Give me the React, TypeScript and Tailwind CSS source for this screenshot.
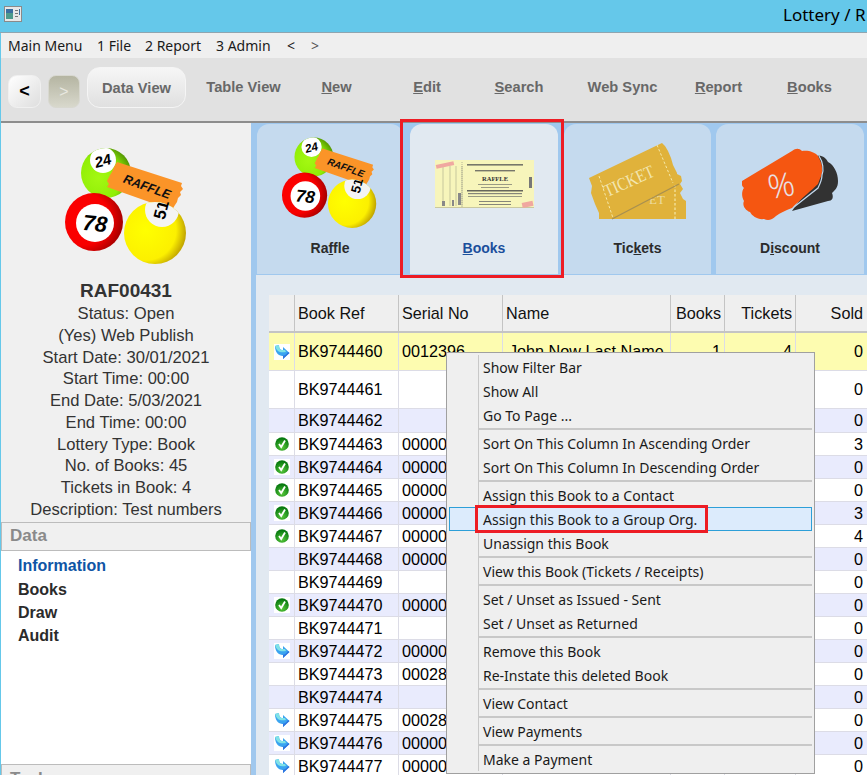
import React from 'react';

const RaffleLogo: React.FC<{ className?: string; id: string }> = ({ className, id }) => (
  <svg viewBox="0 0 122 118" className={className}>
    <defs>
      <radialGradient id={`${id}-g`} cx="35%" cy="60%" r="70%">
        <stop offset="0%" stopColor="#a4f812" />
        <stop offset="65%" stopColor="#90ee06" />
        <stop offset="100%" stopColor="#4f8f02" />
      </radialGradient>
      <radialGradient id={`${id}-r`} cx="32%" cy="45%" r="72%">
        <stop offset="0%" stopColor="#ff0000" />
        <stop offset="62%" stopColor="#f80000" />
        <stop offset="100%" stopColor="#980000" />
      </radialGradient>
      <radialGradient id={`${id}-y`} cx="35%" cy="45%" r="72%">
        <stop offset="0%" stopColor="#ffff00" />
        <stop offset="68%" stopColor="#fcf000" />
        <stop offset="100%" stopColor="#a88400" />
      </radialGradient>
      <clipPath id={`${id}-gc`}><circle cx="41" cy="25" r="25" /></clipPath>
      <clipPath id={`${id}-yc`}><circle cx="90" cy="85" r="31" /></clipPath>
    </defs>
    <circle cx="41" cy="25" r="25" fill={`url(#${id}-g)`} />
    <circle cx="38" cy="12" r="13" fill="#fff" clipPath={`url(#${id}-gc)`} />
    <text x="38" y="18" textAnchor="middle" fontFamily="Liberation Sans, sans-serif" fontSize="15" fontWeight="700" fontStyle="italic" fill="#000" transform="rotate(-15 38 13)">24</text>
    <polygon points="52,14 117,35 116,38 118,41 115,44 116,47 113,50 112,54 110,57 107,62 42,39 44,36 42,33 45,27 47,24 49,19" fill="#fb9428" />
    <text x="82" y="43" textAnchor="middle" fontFamily="Liberation Sans, sans-serif" fontSize="12.5" fontWeight="700" fontStyle="italic" fill="#111" transform="rotate(20 82 39)">RAFFLE</text>
    <circle cx="29" cy="74" r="29" fill={`url(#${id}-r)`} />
    <circle cx="30" cy="75" r="19" fill="#fff" />
    <text x="30" y="83" textAnchor="middle" fontFamily="Liberation Sans, sans-serif" fontSize="22" fontWeight="700" fontStyle="italic" fill="#000" transform="rotate(6 30 75)">78</text>
    <circle cx="90" cy="85" r="31" fill={`url(#${id}-y)`} />
    <circle cx="97" cy="62" r="17" fill="#f4f4f4" clipPath={`url(#${id}-yc)`} />
    <text x="97" y="67" textAnchor="middle" fontFamily="Liberation Sans, sans-serif" fontSize="17" fontWeight="700" fill="#000" transform="rotate(-75 97 62)" clipPath={`url(#${id}-yc)`}>51</text>
  </svg>
);

const BookImage = () => (
  <svg viewBox="0 0 99 48" className="w-[99px] h-[48px] mt-[4px]">
    <rect width="99" height="48" fill="#f7f5bb" />
    <rect y="47" width="99" height="1" fill="#c9c8a0" />
    {[8, 15, 21, 27].map((x) => (
      <line key={x} x1={x} y1="6" x2={x} y2="46" stroke="#a8a88a" strokeWidth="0.6" />
    ))}
    <line x1="27" y1="2" x2="27" y2="47" stroke="#777" strokeWidth="0.5" strokeDasharray="1 1" />
    <rect x="1" y="3" width="18" height="4" fill="#f0a8a0" transform="rotate(-12 10 5)" />
    <rect x="87" y="42" width="11" height="5" fill="#f0a8a0" transform="rotate(-12 92 44)" />
    <rect x="32" y="4" width="56" height="1.6" fill="#77776a" />
    <rect x="40" y="10" width="40" height="1.4" fill="#77776a" />
    <text x="60" y="20.5" textAnchor="middle" fontFamily="Liberation Serif, serif" fontSize="6.5" fontWeight="700" fill="#333">RAFFLE</text>
    <rect x="43" y="24" width="34" height="1" fill="#9a9a84" />
    <rect x="46" y="27" width="28" height="1" fill="#9a9a84" />
    <rect x="32" y="30" width="56" height="1.5" fill="#66665c" />
    <rect x="33" y="33" width="54" height="1.2" fill="#85857a" />
    <rect x="33" y="36" width="54" height="1" fill="#9a9a84" />
    <rect x="44" y="41" width="32" height="1" fill="#85857a" />
    <rect x="44" y="44" width="32" height="1" fill="#85857a" />
    <rect x="94" y="17" width="3" height="11" fill="#777" />
    <rect x="23" y="33" width="3" height="12" fill="#888" />
    <rect x="7" y="41" width="3" height="5" fill="#888" />
    <rect x="17" y="40" width="2" height="6" fill="#888" />
  </svg>
);

const TicketsImage = () => (
  <svg viewBox="0 0 98 78" className="w-[98px] h-[78px]">
    <polygon points="40,40 88,31 92,33 93,38 91,41 94,46 91,50 94,56 97,58 97,76 23,76" fill="#e0b23b" />
    <text x="68" y="61" textAnchor="middle" fontFamily="Liberation Serif, serif" fontSize="13" fill="#ecdca0">ET</text>
    <line x1="86" y1="42" x2="86" y2="76" stroke="#f5e8a8" strokeWidth="1.2" strokeDasharray="2.5 2" />
    <polygon points="0,35 73,0 76,3 79,8 82,15 84,22 88,30 88,41 23,76 10,76 10,70 6,61 2,50 3,43" fill="#e0b23b" />
    <line x1="10" y1="33" x2="24" y2="75" stroke="#f5e8a8" strokeWidth="1" strokeDasharray="2.5 2" />
    <line x1="68" y1="2" x2="84" y2="40" stroke="#f5e8a8" strokeWidth="1" strokeDasharray="2.5 2" />
    <line x1="23" y1="76" x2="90" y2="41" stroke="#a89050" strokeWidth="1.4" />
    <text x="40" y="44" textAnchor="middle" fontFamily="Liberation Serif, serif" fontSize="18" fill="#f3e6b0" transform="rotate(-24 40 38)" textLength="53" lengthAdjust="spacingAndGlyphs">TICKET</text>
  </svg>
);

const DiscountImage = () => (
  <svg viewBox="0 0 96 73" className="w-[96px] h-[73px] mt-[6px]">
    <path d="M75 8 C80 7 84 10 86 14 C92 17 96 25 96 33 C96 40 93 42 90 45 C92 50 90 53 86 53 L50 63 L66 40 Z" fill="#323232" />
    <path d="M0 33 L50 3 C54 0 57 0 60 3 C66 2 73 4 76 8 C78 12 80 16 80 20 C81 26 78 30 76 36 C70 42 60 50 50 60 C44 62 38 65 34 68 C30 72 26 73 22 71 C16 72 10 68 8 64 C3 62 0 57 2 53 C-1 48 0 42 2 40 C0 38 -1 36 0 33 Z" fill="#f55611" />
    <path d="M77 8 C81 14 82 22 80 27 C80 32 78 36 76 40 L52 59" fill="none" stroke="#c5daee" strokeWidth="1.2" />
    <text x="39" y="49" textAnchor="middle" fontFamily="Noto Sans, sans-serif" fontSize="33" fontWeight="300" fill="#e8dfe0" transform="rotate(-10 39 37)">%</text>
  </svg>
);

const ArrowIcon = () => (
  <span className="w-4 h-4 bg-white flex items-center justify-center">
    <svg viewBox="0 0 16 16" className="w-4 h-4">
      <path d="M1 2 L5 1 C5 4 6 6 9 6 L9 3 L15.5 9 L9 15 L9 12 C4 12 1 8 1 2 Z" fill="#3aa4f0" />
      <path d="M1 2 L5 1 C5 4 6 6 9 6 L11 6 L12 8 C6 9 3 8 1 2 Z" fill="#7fe2e6" />
      <path d="M7 12 L9 12 L9 15 L15.5 9 L14 8 C12 11 10 12 7 12 Z" fill="#2f74e0" />
    </svg>
  </span>
);

const CheckIcon = () => (
  <span className="w-4 h-4 bg-white flex items-center justify-center">
    <svg viewBox="0 0 16 16" className="w-4 h-4">
      <defs>
        <radialGradient id="chk" cx="50%" cy="75%" r="65%">
          <stop offset="0%" stopColor="#58c83a" />
          <stop offset="100%" stopColor="#087a10" />
        </radialGradient>
      </defs>
      <circle cx="8" cy="8" r="6.8" fill="url(#chk)" />
      <path d="M5 8 L7.2 11 L11 4.5" fill="none" stroke="#fff" strokeWidth="1.8" />
    </svg>
  </span>
);

type Row = { ref: string; serial?: string; icon?: 'arrow' | 'check'; sold: string; bg: string; h: string; name?: string; books?: string; tickets?: string };

const w = 'bg-white';
const l = 'bg-[#e9ebfd]';
const rows: Row[] = [
  { ref: 'BK9744460', serial: '0012396', icon: 'arrow', sold: '0', bg: 'bg-[#fdfcb0]', h: 'h-[38px]', name: 'John Now Last Name', books: '1', tickets: '4' },
  { ref: 'BK9744461', sold: '0', bg: w, h: 'h-[38px]' },
  { ref: 'BK9744462', sold: '0', bg: l, h: 'h-[24px]' },
  { ref: 'BK9744463', serial: '00000', icon: 'check', sold: '3', bg: w, h: 'h-[23px]' },
  { ref: 'BK9744464', serial: '00000', icon: 'check', sold: '0', bg: l, h: 'h-[23px]' },
  { ref: 'BK9744465', serial: '00000', icon: 'check', sold: '0', bg: w, h: 'h-[23px]' },
  { ref: 'BK9744466', serial: '00000', icon: 'check', sold: '3', bg: l, h: 'h-[23px]' },
  { ref: 'BK9744467', serial: '00000', icon: 'check', sold: '4', bg: w, h: 'h-[23px]' },
  { ref: 'BK9744468', serial: '00000', sold: '0', bg: l, h: 'h-[23px]' },
  { ref: 'BK9744469', sold: '0', bg: w, h: 'h-[23px]' },
  { ref: 'BK9744470', serial: '00000', icon: 'check', sold: '0', bg: l, h: 'h-[23px]' },
  { ref: 'BK9744471', sold: '0', bg: w, h: 'h-[23px]' },
  { ref: 'BK9744472', serial: '00000', icon: 'arrow', sold: '0', bg: l, h: 'h-[23px]' },
  { ref: 'BK9744473', serial: '00028', sold: '0', bg: w, h: 'h-[23px]' },
  { ref: 'BK9744474', sold: '0', bg: l, h: 'h-[23px]' },
  { ref: 'BK9744475', serial: '00028', icon: 'arrow', sold: '0', bg: w, h: 'h-[23px]' },
  { ref: 'BK9744476', serial: '00000', icon: 'arrow', sold: '0', bg: l, h: 'h-[23px]' },
  { ref: 'BK9744477', serial: '00000', icon: 'arrow', sold: '0', bg: w, h: 'h-[23px]' },
];

const infoLines = [
  'Status: Open',
  '(Yes) Web Publish',
  'Start Date: 30/01/2021',
  'Start Time: 00:00',
  'End Date: 5/03/2021',
  'End Time: 00:00',
  'Lottery Type: Book',
  'No. of Books: 45',
  'Tickets in Book: 4',
  'Description: Test numbers',
];

const menuGroups = [
  ['Show Filter Bar', 'Show All', 'Go To Page ...'],
  ['Sort On This Column In Ascending Order', 'Sort On This Column In Descending Order'],
  ['Assign this Book to a Contact', 'Assign this Book to a Group Org.', 'Unassign this Book'],
  ['View this Book (Tickets / Receipts)'],
  ['Set / Unset as Issued - Sent', 'Set / Unset as Returned'],
  ['Remove this Book', 'Re-Instate this deleted Book'],
  ['View Contact'],
  ['View Payments'],
  ['Make a Payment'],
];

const ToolItem: React.FC<{ width: string; pre?: string; u?: string; post: string }> = ({ width, pre, u, post }) => (
  <div className={`${width} shrink-0 text-center`}>
    {pre}
    {u && <span className="underline">{u}</span>}
    {post}
  </div>
);

const Tab: React.FC<{ width: string; active?: boolean; pre: string; u: string; post: string; children: React.ReactNode }> = ({ width, active, pre, u, post, children }) => (
  <div className={`${width} shrink-0 h-[150px] rounded-t-[12px] flex flex-col items-center ${active ? 'bg-[#e1e9f1] text-[#1b4f9c]' : 'bg-[#c5daee] text-[#2b2b2b]'}`}>
    <div className="h-[115px] flex items-center justify-center">{children}</div>
    <div className="text-[14px] font-bold leading-[18px]">
      {pre}
      <span className="underline">{u}</span>
      {post}
    </div>
  </div>
);

const App: React.FC = () => {
  return (
    <div className="relative w-[867px] h-[775px] overflow-hidden flex flex-col bg-[#65c8ea] font-['Liberation_Sans',Arial,sans-serif] text-black">
      {/* title bar */}
      <div className="h-[33px] shrink-0 flex items-center justify-between border-b border-[#8fa5b0] pl-1 font-['Noto_Sans',sans-serif]">
        <svg viewBox="0 0 18 16" className="w-[18px] h-[16px] mb-[4px]">
          <rect x="0.5" y="0.5" width="17" height="15" fill="#e8e8e8" stroke="#8a8a8a" />
          <rect x="2" y="3" width="7" height="10" fill="#4d9a8c" />
          <rect x="2" y="3" width="7" height="4" fill="#3a6fa0" />
          <rect x="11" y="4" width="3" height="1" fill="#777" />
          <rect x="11" y="7" width="3" height="1" fill="#777" />
          <rect x="11" y="10" width="3" height="1" fill="#777" />
          <rect x="15" y="3" width="1" height="6" fill="#3a6fa0" />
        </svg>
        <div className="text-[17px] whitespace-nowrap w-[84px] mb-[2px]">Lottery / R</div>
      </div>

      <div className="flex-1 min-h-0 flex flex-col ml-px">
        {/* menu bar */}
        <div className="h-[25px] shrink-0 bg-[#efefef] flex items-center pl-[7px] text-[14px] text-[#1a1a1a] font-['Noto_Sans',sans-serif]">
          <span className="w-[89px]">Main Menu</span>
          <span className="w-[48px]">1 File</span>
          <span className="w-[71px]">2 Report</span>
          <span className="w-[71px]">3 Admin</span>
          <span className="w-[24px]">&lt;</span>
          <span className="text-[#555]">&gt;</span>
        </div>

        {/* toolbar */}
        <div className="h-[65px] shrink-0 bg-[#e1e1e1] border-b-2 border-[#8d8d8d] flex items-start pl-[7px] text-[14.67px] font-bold text-[#686868]">
          <div className="shrink-0 mt-[17px] w-[33px] h-[33px] rounded-[9px] border border-[#f0f0f0] bg-gradient-to-br from-[#ffffff] to-[#dedede] flex items-center justify-center text-[18px] text-black">&lt;</div>
          <div className="shrink-0 mt-[17px] ml-[7px] w-[32px] h-[33px] rounded-[8px] border border-[#d8d8d0] bg-gradient-to-b from-[#b5b5a2] to-[#d8d8cc] flex items-center justify-center text-[16px] font-normal text-[#e8e8e0]">&gt;</div>
          <div className="shrink-0 mt-[9px] ml-[7px] w-[99px] h-[41px] rounded-[13px] border border-[#f5f5f5] bg-gradient-to-b from-[#f6f6f6] to-[#e0e0e0] flex items-center justify-center">Data View</div>
          <div className="mt-[20px] flex leading-[18px]">
            <ToolItem width="w-[115px]" post="Table View" />
            <ToolItem width="w-[71px]" u="N" post="ew" />
            <ToolItem width="w-[110px]" u="E" post="dit" />
            <ToolItem width="w-[74px]" u="S" post="earch" />
            <ToolItem width="w-[133px]" post="Web Sync" />
            <ToolItem width="w-[59px]" u="R" post="eport" />
            <ToolItem width="w-[123px]" u="B" post="ooks" />
          </div>
        </div>

        <div className="flex-1 min-h-0 flex">
          {/* sidebar */}
          <div className="w-[250px] shrink-0 bg-[#f0f0f0] flex flex-col items-center text-[16.6px] text-[#333]">
            <RaffleLogo id="side" className="w-[122px] h-[118px] mt-[25px] mr-[1px] shrink-0" />
            <div className="mt-[14px] text-[19px] font-bold leading-[22px] text-[#333]">RAF00431</div>
            <div className="w-full text-center leading-[21.75px] mt-px whitespace-nowrap">
              {infoLines.map((line) => (
                <div key={line}>{line}</div>
              ))}
            </div>
            <div className="w-full h-[29px] shrink-0 border border-[#bcbcbc] bg-[#f0f0f0] flex items-center pl-[8px] text-[17px] font-bold text-[#8a8a8a] mt-[1px]">Data</div>
            <div className="w-full flex-1 bg-white pl-[17px] pt-[3px] text-[16px] font-bold text-[#2b2b2b] leading-[23px]">
              <div className="text-[#0f55a5] mb-px">Information</div>
              <div>Books</div>
              <div>Draw</div>
              <div>Audit</div>
            </div>
            <div className="w-full h-[29px] shrink-0 border border-[#bcbcbc] bg-[#f0f0f0] flex items-center pl-[8px] text-[17px] font-bold text-[#8a8a8a] -mb-[18px]">Tasks</div>
          </div>

          {/* main */}
          <div className="flex-1 min-w-0 bg-[#e1e9f1] border-l-[5px] border-[#a0c8ee]">
            <div className="h-[152px] bg-[#a0c8ee] flex items-start pt-px gap-[5px] pl-px">
              <Tab width="w-[146px]" pre="Ra" u="f" post="fle">
                <RaffleLogo id="tab" className="w-[95px] h-[93px] mt-[3px] -ml-[1px]" />
              </Tab>
              <Tab width="w-[148px] ml-[2px]" active pre="" u="B" post="ooks">
                <BookImage />
              </Tab>
              <Tab width="w-[147px] ml-[1px]" pre="Tic" u="k" post="ets">
                <TicketsImage />
              </Tab>
              <Tab width="w-[148px]" pre="D" u="i" post="scount">
                <DiscountImage />
              </Tab>
            </div>

            {/* table */}
            <div className="ml-[13px] mt-[20px] text-[16.2px]">
              <div className="h-[38px] flex bg-[#efefef] border-b-2 border-[#c4c4c4] text-[#111]">
                <div className="w-[26px] border-r border-[#c4c4c4]" />
                <div className="w-[104px] border-r border-[#c4c4c4] flex items-center pl-[3px] pt-px">Book Ref</div>
                <div className="w-[104px] border-r border-[#c4c4c4] flex items-center pl-[3px] pt-px">Serial No</div>
                <div className="w-[168px] border-r border-[#c4c4c4] flex items-center pl-[3px] pt-px">Name</div>
                <div className="w-[54px] border-r border-[#c4c4c4] flex items-center justify-end pr-[3px] pt-px">Books</div>
                <div className="w-[71px] border-r border-[#c4c4c4] flex items-center justify-end pr-[3px] pt-px">Tickets</div>
                <div className="w-[71px] flex items-center justify-end pr-[4px] pt-px">Sold</div>
              </div>
              {rows.map((r) => (
                <div key={r.ref} className={`${r.h} ${r.bg} flex border-b border-[#dcdce6]`}>
                  <div className="w-[26px] border-r border-[#dcdce6] flex items-center justify-center">
                    {r.icon === 'arrow' && <ArrowIcon />}
                    {r.icon === 'check' && <CheckIcon />}
                  </div>
                  <div className="w-[104px] border-r border-[#dcdce6] flex items-center pl-[3px]">{r.ref}</div>
                  <div className="w-[104px] border-r border-[#dcdce6] flex items-center pl-[3px]">{r.serial}</div>
                  <div className="w-[168px] border-r border-[#dcdce6] flex items-center pl-[6px]">{r.name}</div>
                  <div className="w-[54px] border-r border-[#dcdce6] flex items-center justify-end pr-[3px]">{r.books}</div>
                  <div className="w-[71px] border-r border-[#dcdce6] flex items-center justify-end pr-[3px]">{r.tickets}</div>
                  <div className="w-[71px] flex items-center justify-end pr-[4px]">{r.sold}</div>
                </div>
              ))}
            </div>
          </div>
        </div>
      </div>

      {/* context menu */}
      <div className="absolute left-[446px] top-[352px] w-[369px] bg-[#efefef] border border-[#a0a0a0] py-[2px] font-['Noto_Sans',sans-serif] text-[14px] text-[#1a1a1a]">
        <div className="absolute left-[31px] top-[2px] bottom-[2px] w-px bg-[#c8c8c8]" />
        {menuGroups.map((group, i) => (
          <div key={i}>
            {i > 0 && (
              <div className="h-[4px] flex items-center pl-[32px] pr-[2px]">
                <div className="h-[2px] w-full bg-[#c8c8c8]" />
              </div>
            )}
            {group.map((item) => (
              <div
                key={item}
                className={`relative h-[24px] flex items-center pl-[34px] mx-[2px] whitespace-nowrap ${item.includes('Group Org') ? 'bg-[#dcebfc] outline outline-1 -outline-offset-1 outline-[#2d9fd8]' : ''}`}
              >
                {item}
              </div>
            ))}
          </div>
        ))}
      </div>

      {/* red highlights */}
      <div className="absolute left-[400px] top-[119px] w-[164px] h-[159px] border-[3px] border-[#ed1c24]" />
      <div className="absolute left-[475px] top-[505px] w-[233px] h-[28px] border-[3px] border-[#ed1c24]" />
    </div>
  );
};

export default App;
